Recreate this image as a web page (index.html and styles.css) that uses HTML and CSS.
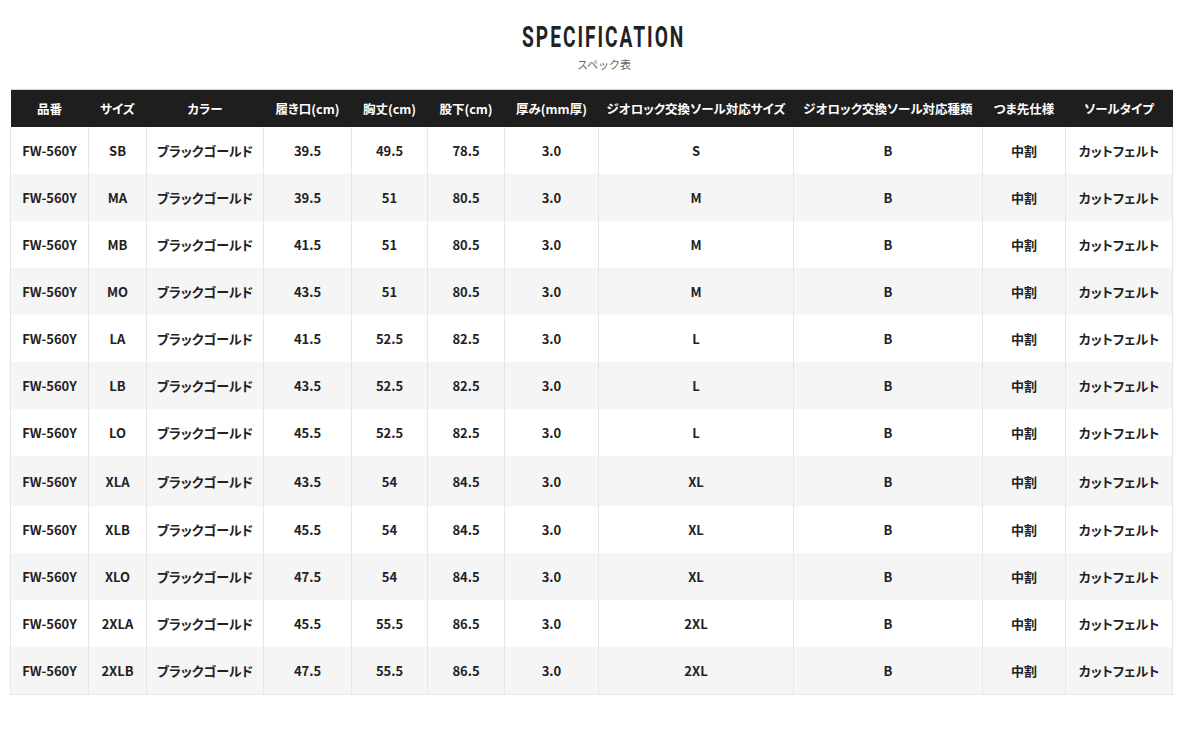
FILE: index.html
```html
<!DOCTYPE html>
<html lang="ja">
<head>
<meta charset="utf-8">
<title>SPECIFICATION</title>
<link rel="stylesheet" href="styles.css">
</head>
<body>
<div class="page">
  <header class="heading">
    <h2 class="title"><span class="title-text">SPECIFICATION</span></h2>
    <p class="subtitle">スペック表</p>
  </header>
  <div class="table-wrap">
    <table class="spec">
      <colgroup>
        <col class="c1"><col class="c2"><col class="c3"><col class="c4"><col class="c5"><col class="c6"><col class="c7"><col class="c8"><col class="c9"><col class="c10"><col class="c11">
      </colgroup>
      <thead>
        <tr><th>品番</th><th>サイズ</th><th>カラー</th><th>履き口(cm)</th><th>胸丈(cm)</th><th>股下(cm)</th><th>厚み(mm厚)</th><th>ジオロック交換ソール対応サイズ</th><th>ジオロック交換ソール対応種類</th><th>つま先仕様</th><th>ソールタイプ</th></tr>
      </thead>
      <tbody>
        <tr><td>FW-560Y</td><td>SB</td><td>ブラックゴールド</td><td>39.5</td><td>49.5</td><td>78.5</td><td>3.0</td><td>S</td><td>B</td><td>中割</td><td>カットフェルト</td></tr>
        <tr><td>FW-560Y</td><td>MA</td><td>ブラックゴールド</td><td>39.5</td><td>51</td><td>80.5</td><td>3.0</td><td>M</td><td>B</td><td>中割</td><td>カットフェルト</td></tr>
        <tr><td>FW-560Y</td><td>MB</td><td>ブラックゴールド</td><td>41.5</td><td>51</td><td>80.5</td><td>3.0</td><td>M</td><td>B</td><td>中割</td><td>カットフェルト</td></tr>
        <tr><td>FW-560Y</td><td>MO</td><td>ブラックゴールド</td><td>43.5</td><td>51</td><td>80.5</td><td>3.0</td><td>M</td><td>B</td><td>中割</td><td>カットフェルト</td></tr>
        <tr><td>FW-560Y</td><td>LA</td><td>ブラックゴールド</td><td>41.5</td><td>52.5</td><td>82.5</td><td>3.0</td><td>L</td><td>B</td><td>中割</td><td>カットフェルト</td></tr>
        <tr><td>FW-560Y</td><td>LB</td><td>ブラックゴールド</td><td>43.5</td><td>52.5</td><td>82.5</td><td>3.0</td><td>L</td><td>B</td><td>中割</td><td>カットフェルト</td></tr>
        <tr><td>FW-560Y</td><td>LO</td><td>ブラックゴールド</td><td>45.5</td><td>52.5</td><td>82.5</td><td>3.0</td><td>L</td><td>B</td><td>中割</td><td>カットフェルト</td></tr>
        <tr class="tall"><td>FW-560Y</td><td>XLA</td><td>ブラックゴールド</td><td>43.5</td><td>54</td><td>84.5</td><td>3.0</td><td>XL</td><td>B</td><td>中割</td><td>カットフェルト</td></tr>
        <tr><td>FW-560Y</td><td>XLB</td><td>ブラックゴールド</td><td>45.5</td><td>54</td><td>84.5</td><td>3.0</td><td>XL</td><td>B</td><td>中割</td><td>カットフェルト</td></tr>
        <tr><td>FW-560Y</td><td>XLO</td><td>ブラックゴールド</td><td>47.5</td><td>54</td><td>84.5</td><td>3.0</td><td>XL</td><td>B</td><td>中割</td><td>カットフェルト</td></tr>
        <tr><td>FW-560Y</td><td>2XLA</td><td>ブラックゴールド</td><td>45.5</td><td>55.5</td><td>86.5</td><td>3.0</td><td>2XL</td><td>B</td><td>中割</td><td>カットフェルト</td></tr>
        <tr><td>FW-560Y</td><td>2XLB</td><td>ブラックゴールド</td><td>47.5</td><td>55.5</td><td>86.5</td><td>3.0</td><td>2XL</td><td>B</td><td>中割</td><td>カットフェルト</td></tr>
      </tbody>
    </table>
  </div>
</div>
</body>
</html>
```

FILE: styles.css
```css
html, body {
  margin: 0;
  padding: 0;
  background: #fff;
}
body {
  font-family: "Noto Sans CJK JP", "Noto Sans", sans-serif;
  color: #222;
}
.page {
  width: 1200px;
}
.heading {
  text-align: center;
  padding: 21px 0 0 8px;
}
.title {
  margin: 0;
  font-family: "Roboto", "DejaVu Sans", sans-serif;
  font-weight: 700;
  font-size: 29px;
  line-height: 32px;
  color: #222;
}
.title-text {
  display: inline-block;
  letter-spacing: 3px;
  transform: scaleX(0.66);
  transform-origin: center;
}
.subtitle {
  margin: 3px 0 0;
  font-size: 11px;
  line-height: 16px;
  color: #666;
}
.table-wrap {
  padding: 17px 0 0 10px;
}
.spec {
  width: 1162px;
  table-layout: fixed;
  border-collapse: collapse;
  font-size: 13px;
  font-weight: 700;
  font-feature-settings: "palt";
}
.c1 { width: 78px; }
.c2 { width: 58px; }
.c3 { width: 117px; }
.c4 { width: 88px; }
.c5 { width: 76px; }
.c6 { width: 77px; }
.c7 { width: 94px; }
.c8 { width: 195px; }
.c9 { width: 189px; }
.c10 { width: 83px; }
.c11 { width: 107px; }
.spec th {
  background: #1e1e1e;
  color: #fff;
  height: 37px;
  padding: 0;
  text-align: center;
  font-size: 12.5px;
  font-weight: 700;
  border-top: 1px solid #d0d0d0;
  white-space: nowrap;
}
.spec td {
  height: 47px;
  padding: 0;
  text-align: center;
  border-left: 1px solid #e6e6e6;
  border-right: 1px solid #e6e6e6;
  white-space: nowrap;
}
.spec tbody tr:nth-child(even) td {
  background: #f5f5f5;
}
.spec tbody tr.tall td {
  height: 50px;
}
.spec tbody tr:last-child td {
  border-bottom: 1px solid #e6e6e6;
}
```
